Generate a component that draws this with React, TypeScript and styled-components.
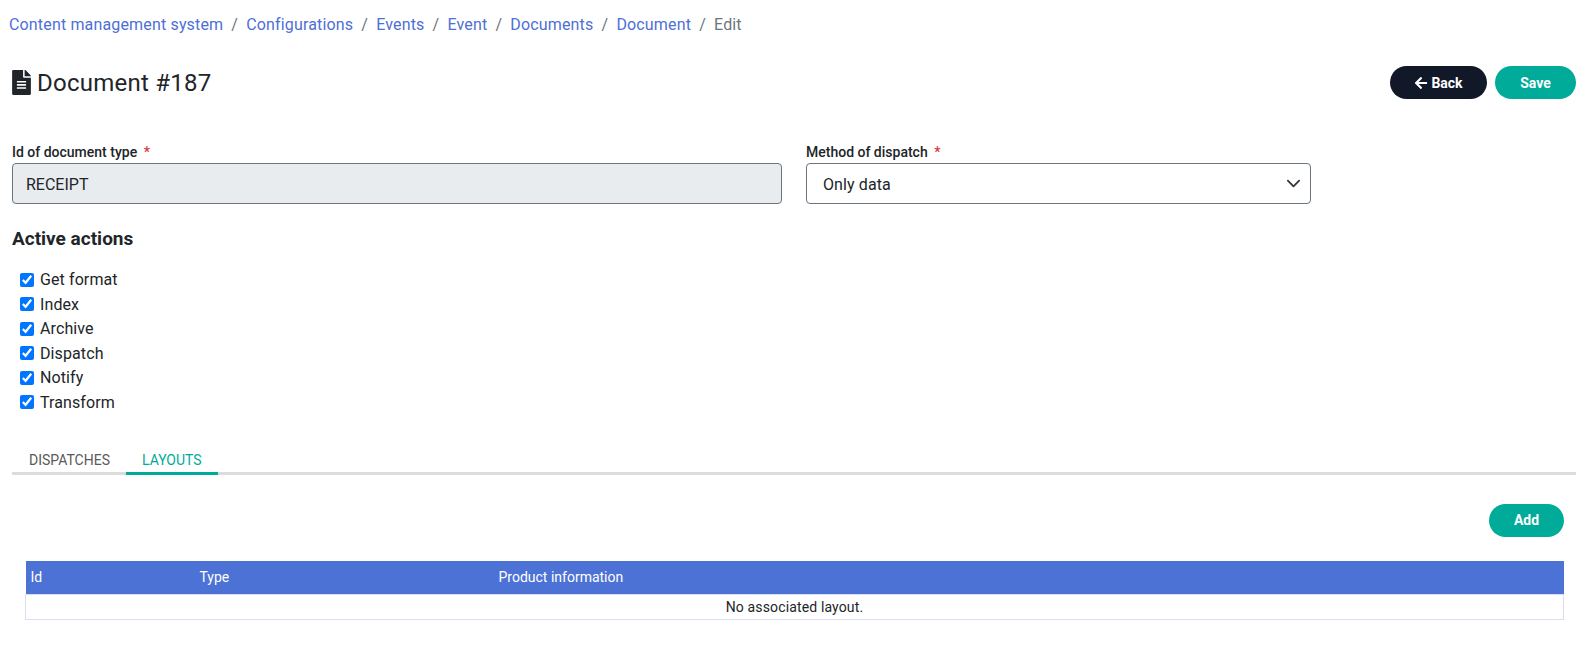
import React from "react";
import styled, { createGlobalStyle } from "styled-components";
import { FaArrowLeft, FaFileAlt } from "react-icons/fa";

const GlobalStyle = createGlobalStyle`
  html, body {
    margin: 0;
    background: #fff;
    color: #212529;
    font-family: Roboto, "Liberation Sans", sans-serif;
  }
`;

const Page = styled.div`
  width: 1586px;
  height: 657px;
  box-sizing: border-box;
  padding: 0 10px 0 12px;
  overflow: hidden;
`;

const Breadcrumb = styled.nav`
  display: flex;
  align-items: center;
  height: 24px;
  margin: 12px 0 0 -3px;
  font-size: 16px;
  letter-spacing: 0.16px;
`;
const Crumb = styled.a`
  color: #4e6fd6;
  text-decoration: none;
`;
const CurrentCrumb = styled.span`
  color: #6c757d;
`;
const Separator = styled.span`
  padding: 0 8.1px;
  color: #6c757d;
`;

const Header = styled.header`
  display: flex;
  justify-content: space-between;
  align-items: center;
  height: 33px;
  margin-top: 30px;
`;
const Title = styled.h1`
  display: flex;
  align-items: center;
  gap: 6px;
  margin: 0;
  padding-top: 2px;
  font-size: 24px;
  font-weight: 400;
  letter-spacing: 0.25px;
  line-height: 31px;
  svg {
    width: 19px;
    height: 25px;
    margin-top: -2px;
  }
`;
const Actions = styled.div`
  display: flex;
  gap: 8px;
`;
const Pill = styled.button<{ $dark?: boolean; $width: number }>`
  display: flex;
  align-items: center;
  justify-content: center;
  gap: 3px;
  width: ${(p) => p.$width}px;
  height: 33px;
  padding: 0;
  border: 0;
  border-radius: 17px;
  background: ${(p) => (p.$dark ? "#111827" : "#00ab9a")};
  color: #fff;
  font-family: inherit;
  font-size: 14px;
  font-weight: 700;
  svg {
    font-size: 14px;
  }
`;

const FormGrid = styled.div`
  display: grid;
  grid-template-columns: 770px 505px;
  column-gap: 24px;
  margin-top: 43px;
`;
const Field = styled.div`
  display: flex;
  flex-direction: column;
`;
const Label = styled.label`
  height: 21px;
  font-size: 14px;
  font-weight: 500;
  line-height: 20px;
`;
const Required = styled.span`
  margin-left: 3px;
  color: #dc3545;
`;
const TextInput = styled.input`
  box-sizing: border-box;
  height: 41px;
  padding: 1px 13px 0;
  border: 1px solid #6c757d;
  border-radius: 4px;
  background: #e9ecef;
  color: #212529;
  font-family: inherit;
  font-size: 16px;
`;
const SelectWrap = styled.div`
  position: relative;
  height: 41px;
`;
const Select = styled.select`
  box-sizing: border-box;
  width: 100%;
  height: 41px;
  padding: 1px 16px 0;
  border: 1px solid #6c757d;
  border-radius: 4px;
  appearance: none;
  background: #fff;
  color: #212529;
  font-family: inherit;
  font-size: 16px;
  letter-spacing: 0.1px;
`;
const Chevron = styled.svg`
  position: absolute;
  top: 13px;
  right: 10px;
  width: 15px;
  height: 15px;
  pointer-events: none;
`;

const SectionTitle = styled.h2`
  margin: 24px 0 0;
  font-size: 19px;
  font-weight: 700;
  line-height: 22px;
`;
const CheckList = styled.div`
  display: flex;
  flex-direction: column;
  margin: 17.5px 0 0 8px;
`;
const CheckRow = styled.label`
  display: flex;
  align-items: center;
  gap: 6px;
  height: 24.5px;
  font-size: 16px;
  letter-spacing: 0.1px;
`;
const Check = styled.input`
  width: 14px;
  height: 14px;
  margin: 0;
`;

const Tabs = styled.div`
  display: flex;
  margin-top: 33px;
  padding-left: 1px;
  border-bottom: 3px solid #dcdcdc;
`;
const Tab = styled.button<{ $active?: boolean }>`
  height: 24px;
  margin-bottom: -3px;
  padding: 0 16px;
  border: 0;
  border-bottom: 3px solid ${(p) => (p.$active ? "#00ab9a" : "transparent")};
  background: none;
  color: ${(p) => (p.$active ? "#00ab9a" : "#5a5a5a")};
  font-family: inherit;
  font-size: 14px;
  box-sizing: content-box;
`;

const Toolbar = styled.div`
  display: flex;
  justify-content: flex-end;
  margin: 29px 12px 0 0;
`;

const Table = styled.table`
  width: 1539px;
  margin: 24px 0 0 13px;
  border-collapse: collapse;
  table-layout: fixed;
  font-size: 14px;
`;
const HeadCell = styled.th<{ $width?: number }>`
  ${(p) => (p.$width ? `width: ${p.$width}px;` : "")}
  height: 33px;
  padding: 0 5px;
  background: #4c72d6;
  color: #fff;
  font-weight: 400;
  text-align: left;
`;
const EmptyCell = styled.td`
  height: 24px;
  padding: 0;
  border: 1px solid #d8def5;
  letter-spacing: 0.14px;
  text-align: center;
`;

const crumbs = ["Content management system", "Configurations", "Events", "Event", "Documents", "Document"];
const actions = ["Get format", "Index", "Archive", "Dispatch", "Notify", "Transform"];

const App = () => {
  return (
    <Page>
      <GlobalStyle />
      <Breadcrumb>
        {crumbs.map((crumb) => (
          <React.Fragment key={crumb}>
            <Crumb href="#">{crumb}</Crumb>
            <Separator>/</Separator>
          </React.Fragment>
        ))}
        <CurrentCrumb>Edit</CurrentCrumb>
      </Breadcrumb>

      <Header>
        <Title>
          <FaFileAlt />
          Document #187
        </Title>
        <Actions>
          <Pill $dark $width={97}>
            <FaArrowLeft />
            Back
          </Pill>
          <Pill $width={81}>Save</Pill>
        </Actions>
      </Header>

      <FormGrid>
        <Field>
          <Label>
            Id of document type <Required>*</Required>
          </Label>
          <TextInput value="RECEIPT" disabled readOnly />
        </Field>
        <Field>
          <Label>
            Method of dispatch <Required>*</Required>
          </Label>
          <SelectWrap>
            <Select defaultValue="data">
              <option value="data">Only data</option>
            </Select>
            <Chevron viewBox="0 0 16 16" fill="none" stroke="#343a40" strokeWidth="2" strokeLinecap="round" strokeLinejoin="round">
              <path d="m2 5 6 6 6-6" />
            </Chevron>
          </SelectWrap>
        </Field>
      </FormGrid>

      <SectionTitle>Active actions</SectionTitle>
      <CheckList>
        {actions.map((action) => (
          <CheckRow key={action}>
            <Check type="checkbox" defaultChecked />
            {action}
          </CheckRow>
        ))}
      </CheckList>

      <Tabs>
        <Tab>DISPATCHES</Tab>
        <Tab $active>LAYOUTS</Tab>
      </Tabs>

      <Toolbar>
        <Pill $width={75}>Add</Pill>
      </Toolbar>

      <Table>
        <thead>
          <tr>
            <HeadCell $width={159}>Id</HeadCell>
            <HeadCell $width={289}>Type</HeadCell>
            <HeadCell>Product information</HeadCell>
          </tr>
        </thead>
        <tbody>
          <tr>
            <EmptyCell colSpan={3}>No associated layout.</EmptyCell>
          </tr>
        </tbody>
      </Table>
    </Page>
  );
};

export default App;
